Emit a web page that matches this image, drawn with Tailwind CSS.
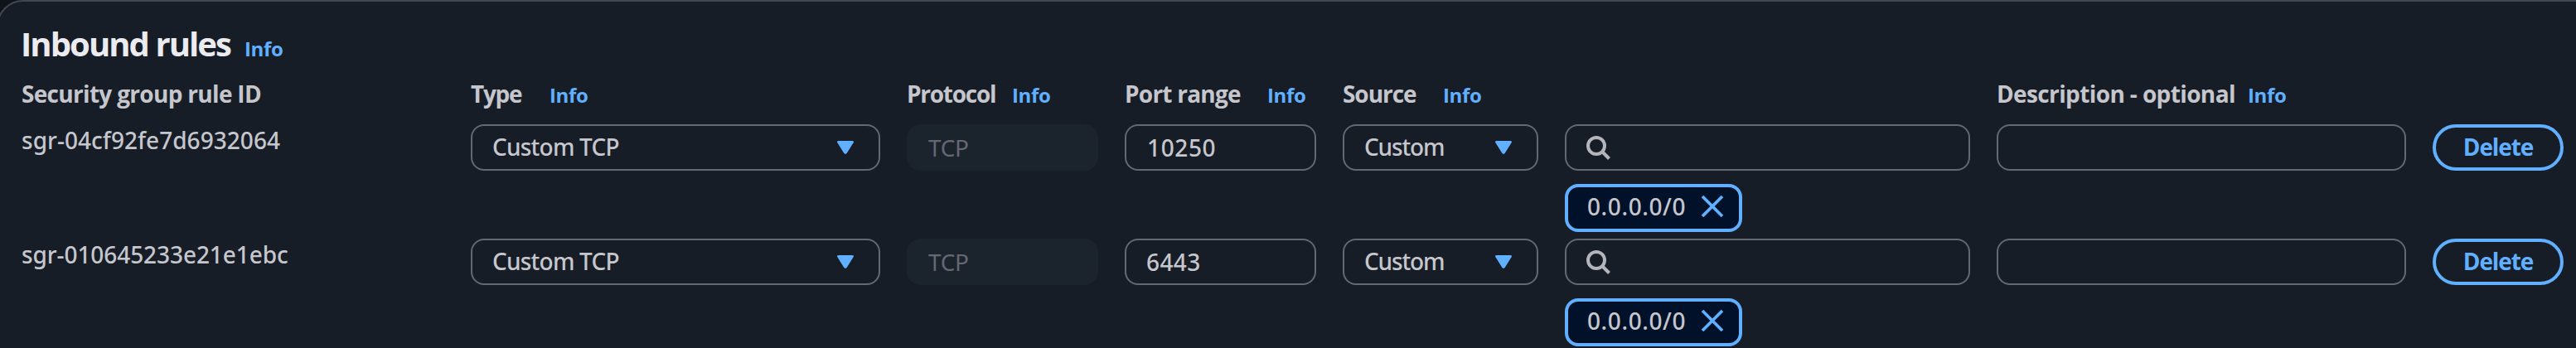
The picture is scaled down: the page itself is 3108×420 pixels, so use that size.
<!DOCTYPE html>
<html lang="en">
<head>
<meta charset="utf-8">
<title>Inbound rules</title>
<script src="https://cdn.jsdelivr.net/npm/@tailwindcss/browser@4"></script>
</head>
<body class="bg-[#0f141a] overflow-hidden font-['Open_Sans',sans-serif] text-[28px] leading-9 text-[#c6c6cd]">
<main class="w-[3160px] h-[440px] -ml-1 border-2 border-[#424650] rounded-tl-[32px] bg-[#161d26] pl-7 pt-[27px]">
  <header class="flex items-baseline h-[66px] leading-[48px]">
    <h2 class="w-[269px] -ml-px mr-px whitespace-nowrap text-[40px] font-bold tracking-[-1.93px] text-[#ebebf0]">Inbound rules</h2>
    <a class="text-2xl font-bold tracking-[-0.34px] text-[#61afff]">Info</a>
  </header>

  <div class="grid grid-cols-[510px_494px_231px_231px_236px_489px_494px_158px] gap-x-8 h-[55px] font-bold whitespace-nowrap">
    <div class="tracking-[-0.69px]">Security group rule ID</div>
    <div class="flex items-baseline"><span class="w-[95px] tracking-[-1.29px]">Type</span><a class="text-2xl tracking-[-0.34px] text-[#61afff]">Info</a></div>
    <div class="flex items-baseline"><span class="w-[127px] tracking-[-1.27px]">Protocol</span><a class="text-2xl tracking-[-0.34px] text-[#61afff]">Info</a></div>
    <div class="flex items-baseline"><span class="w-[172px] tracking-[-0.77px]">Port range</span><a class="text-2xl tracking-[-0.34px] text-[#61afff]">Info</a></div>
    <div class="flex items-baseline"><span class="w-[121px] tracking-[-1.05px]">Source</span><a class="text-2xl tracking-[-0.34px] text-[#61afff]">Info</a></div>
    <div></div>
    <div class="flex items-baseline"><span class="w-[303px] tracking-[-0.62px]">Description - optional</span><a class="text-2xl tracking-[-0.34px] text-[#61afff]">Info</a></div>
  </div>

  <div class="grid grid-cols-[510px_494px_231px_231px_236px_489px_494px_158px] gap-x-8 h-[138px] items-start whitespace-nowrap font-['Noto_Sans',sans-serif] font-medium">
    <div class="pt-px tracking-[0.04px]">sgr-04cf92fe7d6932064</div>
    <div class="flex h-14 items-center justify-between rounded-2xl border-2 border-[#656871] pl-6 pr-[30px]">
      <span class="pb-0.5 tracking-[-0.78px]">Custom TCP</span>
      <svg class="w-5 h-4" viewBox="0 0 20 16" fill="#61afff"><path d="M1.6 0h16.8q2.2.2 1.2 2.3L11.8 14.8q-1.8 2.2-3.6 0L.4 2.3Q-.6.2 1.6 0z"/></svg>
    </div>
    <div class="flex h-14 items-center rounded-2xl bg-[#1b232d] pl-[26px] text-[#656871] font-normal tracking-[-0.35px]">TCP</div>
    <div class="flex h-14 items-center rounded-2xl border-2 border-[#656871] pl-[25px] tracking-[0.61px]">10250</div>
    <div class="flex h-14 items-center justify-between rounded-2xl border-2 border-[#656871] pl-6 pr-[30px]">
      <span class="pb-0.5 tracking-[-1.16px]">Custom</span>
      <svg class="w-5 h-4" viewBox="0 0 20 16" fill="#61afff"><path d="M1.6 0h16.8q2.2.2 1.2 2.3L11.8 14.8q-1.8 2.2-3.6 0L.4 2.3Q-.6.2 1.6 0z"/></svg>
    </div>
    <div class="flex flex-col items-start gap-4">
      <div class="flex h-14 w-full items-center rounded-2xl border-2 border-[#656871] pl-6">
        <svg class="w-[30px] h-[30px]" viewBox="0 0 30 30" fill="none" stroke="#b4b4bb" stroke-width="4"><circle cx="12" cy="13" r="10"/><path d="M19 20l8.5 8.5"/></svg>
      </div>
      <div class="flex h-[58px] w-[214px] items-center justify-between rounded-2xl border-4 border-[#61afff] bg-[#001129] pl-[23px] pr-[18px] pb-1">
        <span class="tracking-[0.6px]">0.0.0.0/0</span>
        <svg class="w-7 h-7" viewBox="0 0 28 28" fill="none" stroke="#61afff" stroke-width="3.8"><path d="M2 2l24 24M26 2L2 26"/></svg>
      </div>
    </div>
    <div class="h-14 rounded-2xl border-2 border-[#656871]"></div>
    <button class="flex h-14 items-center justify-center rounded-full border-4 border-[#61afff] pb-0.5 font-['Open_Sans',sans-serif] font-bold tracking-[-1.1px] text-[#61afff]">Delete</button>
  </div>

  <div class="grid grid-cols-[510px_494px_231px_231px_236px_489px_494px_158px] gap-x-8 h-[138px] items-start whitespace-nowrap font-['Noto_Sans',sans-serif] font-medium">
    <div class="pt-px tracking-[-0.08px]">sgr-010645233e21e1ebc</div>
    <div class="flex h-14 items-center justify-between rounded-2xl border-2 border-[#656871] pl-6 pr-[30px]">
      <span class="pb-0.5 tracking-[-0.78px]">Custom TCP</span>
      <svg class="w-5 h-4" viewBox="0 0 20 16" fill="#61afff"><path d="M1.6 0h16.8q2.2.2 1.2 2.3L11.8 14.8q-1.8 2.2-3.6 0L.4 2.3Q-.6.2 1.6 0z"/></svg>
    </div>
    <div class="flex h-14 items-center rounded-2xl bg-[#1b232d] pl-[26px] text-[#656871] font-normal tracking-[-0.35px]">TCP</div>
    <div class="flex h-14 items-center rounded-2xl border-2 border-[#656871] pl-6 tracking-[0.4px]">6443</div>
    <div class="flex h-14 items-center justify-between rounded-2xl border-2 border-[#656871] pl-6 pr-[30px]">
      <span class="pb-0.5 tracking-[-1.16px]">Custom</span>
      <svg class="w-5 h-4" viewBox="0 0 20 16" fill="#61afff"><path d="M1.6 0h16.8q2.2.2 1.2 2.3L11.8 14.8q-1.8 2.2-3.6 0L.4 2.3Q-.6.2 1.6 0z"/></svg>
    </div>
    <div class="flex flex-col items-start gap-4">
      <div class="flex h-14 w-full items-center rounded-2xl border-2 border-[#656871] pl-6">
        <svg class="w-[30px] h-[30px]" viewBox="0 0 30 30" fill="none" stroke="#b4b4bb" stroke-width="4"><circle cx="12" cy="13" r="10"/><path d="M19 20l8.5 8.5"/></svg>
      </div>
      <div class="flex h-[58px] w-[214px] items-center justify-between rounded-2xl border-4 border-[#61afff] bg-[#001129] pl-[23px] pr-[18px] pb-1">
        <span class="tracking-[0.6px]">0.0.0.0/0</span>
        <svg class="w-7 h-7" viewBox="0 0 28 28" fill="none" stroke="#61afff" stroke-width="3.8"><path d="M2 2l24 24M26 2L2 26"/></svg>
      </div>
    </div>
    <div class="h-14 rounded-2xl border-2 border-[#656871]"></div>
    <button class="flex h-14 items-center justify-center rounded-full border-4 border-[#61afff] pb-0.5 font-['Open_Sans',sans-serif] font-bold tracking-[-1.1px] text-[#61afff]">Delete</button>
  </div>
</main>
</body>
</html>
